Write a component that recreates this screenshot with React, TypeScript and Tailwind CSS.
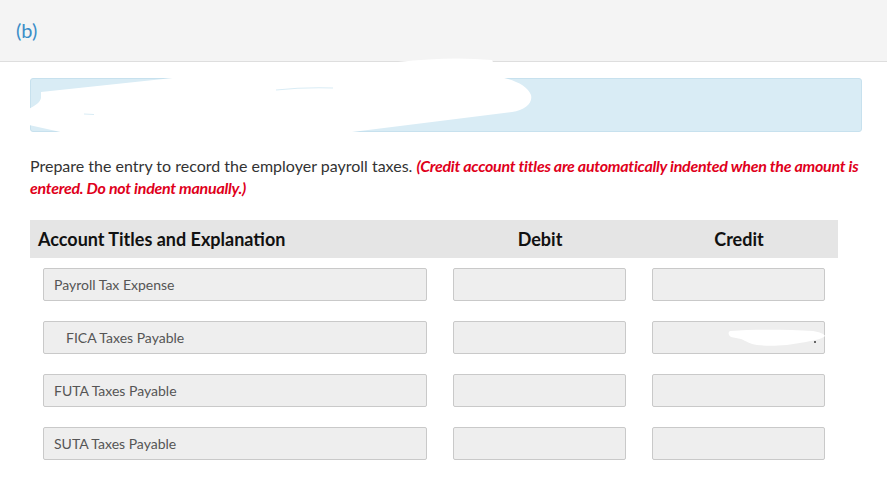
import React from "react";

const rows = [
  { title: "Payroll Tax Expense", indent: false, blob: false },
  { title: "FICA Taxes Payable", indent: true, blob: true },
  { title: "FUTA Taxes Payable", indent: false, blob: false },
  { title: "SUTA Taxes Payable", indent: false, blob: false },
];

export default function App() {
  return (
    <div className="relative w-[887px] h-[495px] bg-white font-['Lato','Open_Sans',sans-serif] overflow-hidden">
      <div className="h-[62px] bg-[#f4f4f4] border-b border-[#dedede] flex items-center pl-4">
        <span className="text-[20px] text-[#3b8ec8] leading-none pb-[1px]">(b)</span>
      </div>

      <div className="pl-[30px] pr-[20px]">
        <div className="mt-4 mr-[5px] h-[54px] rounded-[3px] bg-[#d9ecf5] border border-[#c7e1ee]" />

        <p className="mt-[23px] text-[16px] leading-[22px] text-[#333333]">
          Prepare the entry to record the employer payroll taxes.{" "}
          <span className="text-[#e0001b] font-bold italic tracking-[-0.27px]">
            (Credit account titles are automatically indented when the amount is entered. Do not
            indent manually.)
          </span>
        </p>

        <div className="mt-[21px] w-[808px]">
          <div className="grid grid-cols-[410px_200px_198px] h-[38px] items-center bg-[#e5e5e5] text-[18px] font-bold text-[#111]">
            <div className="pl-2">Account Titles and Explanation</div>
            <div className="text-center">Debit</div>
            <div className="text-center">Credit</div>
          </div>

          <div className="pt-[10px] flex flex-col gap-[20px]">
            {rows.map((r) => (
              <div key={r.title} className="grid grid-cols-[410px_200px_198px]">
                <div className="pl-[13px]">
                  <div
                    className={`w-[384px] h-[33px] rounded-[2px] border border-[#c9c9c9] bg-[#eeeeee] flex items-center text-[14px] text-[#555] ${
                      r.indent ? "pl-[22px]" : "pl-[10px]"
                    }`}
                  >
                    {r.title}
                  </div>
                </div>
                <div className="pl-[13px]">
                  <div className="w-[173px] h-[33px] rounded-[2px] border border-[#c9c9c9] bg-[#eeeeee]" />
                </div>
                <div className="pl-[12px]">
                  <div className="relative w-[173px] h-[33px] rounded-[2px] border border-[#c9c9c9] bg-[#eeeeee]">
                    {r.blob && (
                      <span className="absolute right-[8px] top-[19px] w-[2px] h-[2px] bg-[#666]" />
                    )}
                  </div>
                </div>
              </div>
            ))}
          </div>
        </div>
      </div>

      {/* redaction scribbles overlaying content */}
      <svg
        className="absolute left-0 top-0 pointer-events-none"
        width="887"
        height="495"
        viewBox="0 0 887 495"
      >
        <path
          d="M41 92 L182 77 L398 62 Q450 56 492 60 L500 77 C515 80 528 86 531 95 C533 103 525 110 512 112 L344 133 L65 133 L29 125 L29 109 C34 106 40 103 41 98 Z"
          fill="#ffffff"
        />
        <path d="M276 90 Q305 87 333 88" stroke="#d9ecf5" strokeWidth="1.2" fill="none" />
        <path d="M84 114 L94 114.5" stroke="#d9ecf5" strokeWidth="1.2" fill="none" />
        <path
          d="M730 331 C760 329 790 330 813 331 C820 332 824 334 825 336 C822 339 815 340 806 342 L787 345 C775 346 765 346 757 345 C750 344 746 341 741 339 L731 337 C728 335 728 332 730 331 Z"
          fill="#ffffff"
        />
      </svg>
    </div>
  );
}
